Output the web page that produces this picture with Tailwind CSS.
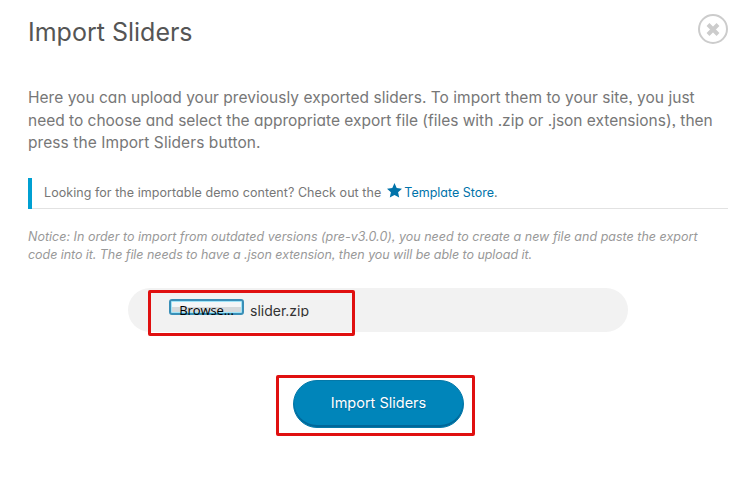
<!DOCTYPE html>
<html lang="en"><head><meta charset="utf-8"><title>Import Sliders</title>
<script src="https://cdn.jsdelivr.net/npm/@tailwindcss/browser@4"></script></head>
<body class="w-[747px] h-[480px] overflow-hidden bg-white font-['Inter',sans-serif] [font-feature-settings:'cv11','ss03']">
<main class="pl-7 pr-[19px] pt-[13px]">
<header class="flex h-[36px] justify-between"><h1 class="text-[25px] leading-[38px] text-[#555] whitespace-nowrap">Import Sliders</h1>
<svg class="w-[30px] h-[30px] mt-px" viewBox="0 0 30 30" fill="none" stroke="#ccc"><circle cx="15" cy="15" r="14" stroke-width="2"/><path d="M10 10.5L20 20.5M20 10.5L10 20.5" stroke-width="4"/></svg></header>
<p class="mt-[38px] text-[15.5px] leading-[22.5px] text-[#777] whitespace-nowrap"><span class="tracking-[0.025px]">Here you can upload your previously exported sliders. To import them to your site, you just</span><br><span class="tracking-[-0.01px]">need to choose and select the appropriate export file (files with .zip or .json extensions), then</span><br><span class="tracking-[0.08px]">press the Import Sliders button.</span></p>
<div class="mt-[23px] h-[31px] w-[700px] flex items-center border-l-4 border-[#00a0d2] text-[12.5px] text-[#777] whitespace-nowrap"><div class="flex h-full flex-1 items-center border-b border-[#e2e2e2] pl-3 pt-[2px]"><span class="tracking-[0.06px]">Looking for the importable demo content? Check out the</span>
<svg class="ml-[6px] mr-[2px] mb-[6px] h-[15px] w-[15px] shrink-0" viewBox="0 0 15 15" fill="#0073aa"><path d="M7.5 0L9.7 5.1L15 5.7L11.1 9.2L12.2 14.6L7.5 11.9L2.8 14.6L3.9 9.2L0 5.7L5.3 5.1Z"/></svg><a class="text-[#0073aa]">Template Store</a>.</div></div>
<p class="mt-[19px] text-[12.5px] leading-[18px] italic text-[#999] whitespace-nowrap"><span class="tracking-[0.01px]">Notice: In order to import from outdated versions (pre-v3.0.0), you need to create a new file and paste the export</span><br><span class="tracking-[-0.06px]">code into it. The file needs to have a .json extension, then you will be able to upload it.</span></p>
<div class="relative mt-[24px] ml-[100px] h-[44px] w-[500px] rounded-full bg-[#f2f2f2] pt-[11px] pl-[41px]">
<div class="flex h-[17px] whitespace-nowrap"><button class="h-[16px] w-[75px] rounded-[3px] border-2 border-[#3a8fb7] bg-linear-to-b from-[#f4f6f7] from-50% to-[#d5d9db] to-50% font-['Open_Sans',sans-serif] text-[13px] tracking-[-0.1px] text-black shadow-[inset_0_0_0_1px_#9fe4f8]"><span class="block h-[12px] leading-[19px]">Browse...</span></button><span class="ml-[6px] h-[18px] overflow-hidden text-[14px] leading-[24px] text-[#333]">slider.zip</span></div>
<div class="absolute left-[20px] top-[2px] h-[46px] w-[207px] rounded-[2px] border-3 border-[#e01010]"></div></div>
<div class="ml-[248px] mt-[43px] flex h-[61px] w-[199px] rounded-[2px] border-3 border-[#e01010] pt-[2px] pl-[14px]"><button class="h-[48px] w-[171px] shrink-0 rounded-full border border-[#0478a8] bg-[#0085ba] pb-[2px] text-[14.5px] text-white shadow-[inset_0_-2px_0_#006799] [text-shadow:0_1px_1px_#006799]">Import Sliders</button></div>
</main></body></html>
